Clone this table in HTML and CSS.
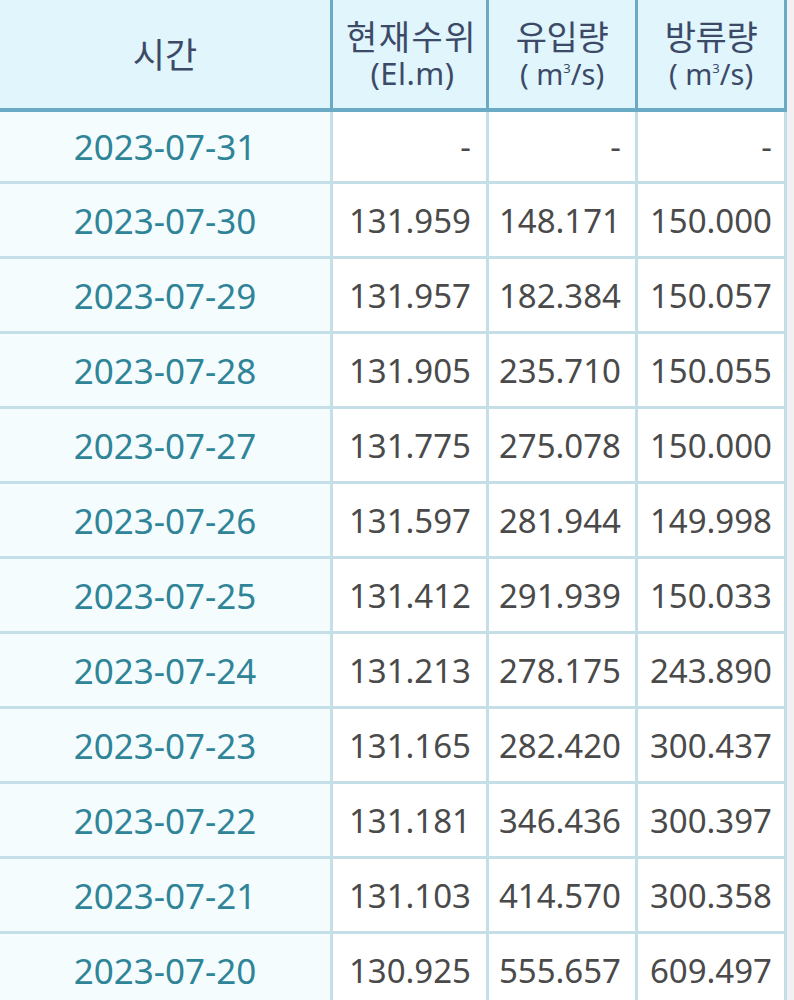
FILE: index.html
```html
<!DOCTYPE html>
<html lang="ko">
<head>
<meta charset="utf-8">
<title>수위 정보</title>
<link rel="stylesheet" href="styles.css">
</head>
<body>
<div class="wrap">
<table class="grid">
  <colgroup>
    <col class="c-time">
    <col class="c-num1">
    <col class="c-num">
    <col class="c-num">
  </colgroup>
  <thead>
    <tr>
      <th><span class="ko">시간</span></th>
      <th><span class="ko wide">현재수위</span><br><span class="unit el">(El.m)</span></th>
      <th><span class="ko">유입량</span><br><span class="unit">( m<sup>3</sup>/s)</span></th>
      <th><span class="ko">방류량</span><br><span class="unit">( m<sup>3</sup>/s)</span></th>
    </tr>
  </thead>
  <tbody>
    <tr><td class="date">2023-07-31</td><td>-</td><td>-</td><td>-</td></tr>
    <tr><td class="date">2023-07-30</td><td>131.959</td><td>148.171</td><td>150.000</td></tr>
    <tr><td class="date">2023-07-29</td><td>131.957</td><td>182.384</td><td>150.057</td></tr>
    <tr><td class="date">2023-07-28</td><td>131.905</td><td>235.710</td><td>150.055</td></tr>
    <tr><td class="date">2023-07-27</td><td>131.775</td><td>275.078</td><td>150.000</td></tr>
    <tr><td class="date">2023-07-26</td><td>131.597</td><td>281.944</td><td>149.998</td></tr>
    <tr><td class="date">2023-07-25</td><td>131.412</td><td>291.939</td><td>150.033</td></tr>
    <tr><td class="date">2023-07-24</td><td>131.213</td><td>278.175</td><td>243.890</td></tr>
    <tr><td class="date">2023-07-23</td><td>131.165</td><td>282.420</td><td>300.437</td></tr>
    <tr><td class="date">2023-07-22</td><td>131.181</td><td>346.436</td><td>300.397</td></tr>
    <tr><td class="date">2023-07-21</td><td>131.103</td><td>414.570</td><td>300.358</td></tr>
    <tr><td class="date">2023-07-20</td><td>130.925</td><td>555.657</td><td>609.497</td></tr>
  </tbody>
</table>
</div>
</body>
</html>
```

FILE: styles.css
```css
html, body {
  margin: 0;
  padding: 0;
  background: #ffffff;
}
body {
  font-family: "Noto Sans", "Noto Sans CJK KR", sans-serif;
}
.wrap {
  width: 794px;
  background: linear-gradient(to right, #ffffff 0, #ffffff 786px, #f1f1f1 786px);
}
.grid {
  width: 787px;
  table-layout: fixed;
  border-collapse: separate;
  border-spacing: 0;
  background: #ffffff;
}
.c-time { width: 333px; }
.c-num1 { width: 156px; }
.c-num { width: 149px; }

.grid th {
  background: #e0f5fc;
  color: #3c4a68;
  font-family: "Noto Sans CJK KR", "Noto Sans", sans-serif;
  font-weight: 400;
  font-size: 30px;
  line-height: 35px;
  height: 108px;
  padding: 0;
  text-align: center;
  vertical-align: middle;
  border-right: 3px solid #6aaac4;
  border-bottom: 4px solid #6aaac4;
}
.grid th .ko {
  font-size: 34px;
  line-height: 35px;
  letter-spacing: -0.5px;
}
.grid th .ko.wide {
  letter-spacing: 1.5px;
  margin-left: 4px;
}
.grid th:first-child .ko {
  font-size: 35px;
  letter-spacing: 0;
}
.grid th .unit {
  font-family: "Noto Sans", sans-serif;
  font-size: 29px;
  line-height: 35px;
}
.grid th .unit.el {
  font-size: 31px;
  letter-spacing: 0.5px;
  margin-left: 6px;
}
.grid sup {
  font-size: 0.45em;
  vertical-align: 0.9em;
  line-height: 0;
}

.grid td {
  height: 72px;
  padding: 0 15px 0 0;
  font-size: 33px;
  color: #4a4a4a;
  text-align: right;
  vertical-align: middle;
  border-right: 3px solid #c4dfe8;
  border-bottom: 3px solid #c4dfe8;
}
.grid td:nth-child(3) { padding-right: 14px; }
.grid td:nth-child(4) { padding-right: 12px; }
.grid tbody tr:first-child td { height: 69px; }
.grid td.date {
  background: #f4fcfe;
  color: #2f8498;
  font-size: 35px;
  text-align: center;
  padding: 0;
}
```
